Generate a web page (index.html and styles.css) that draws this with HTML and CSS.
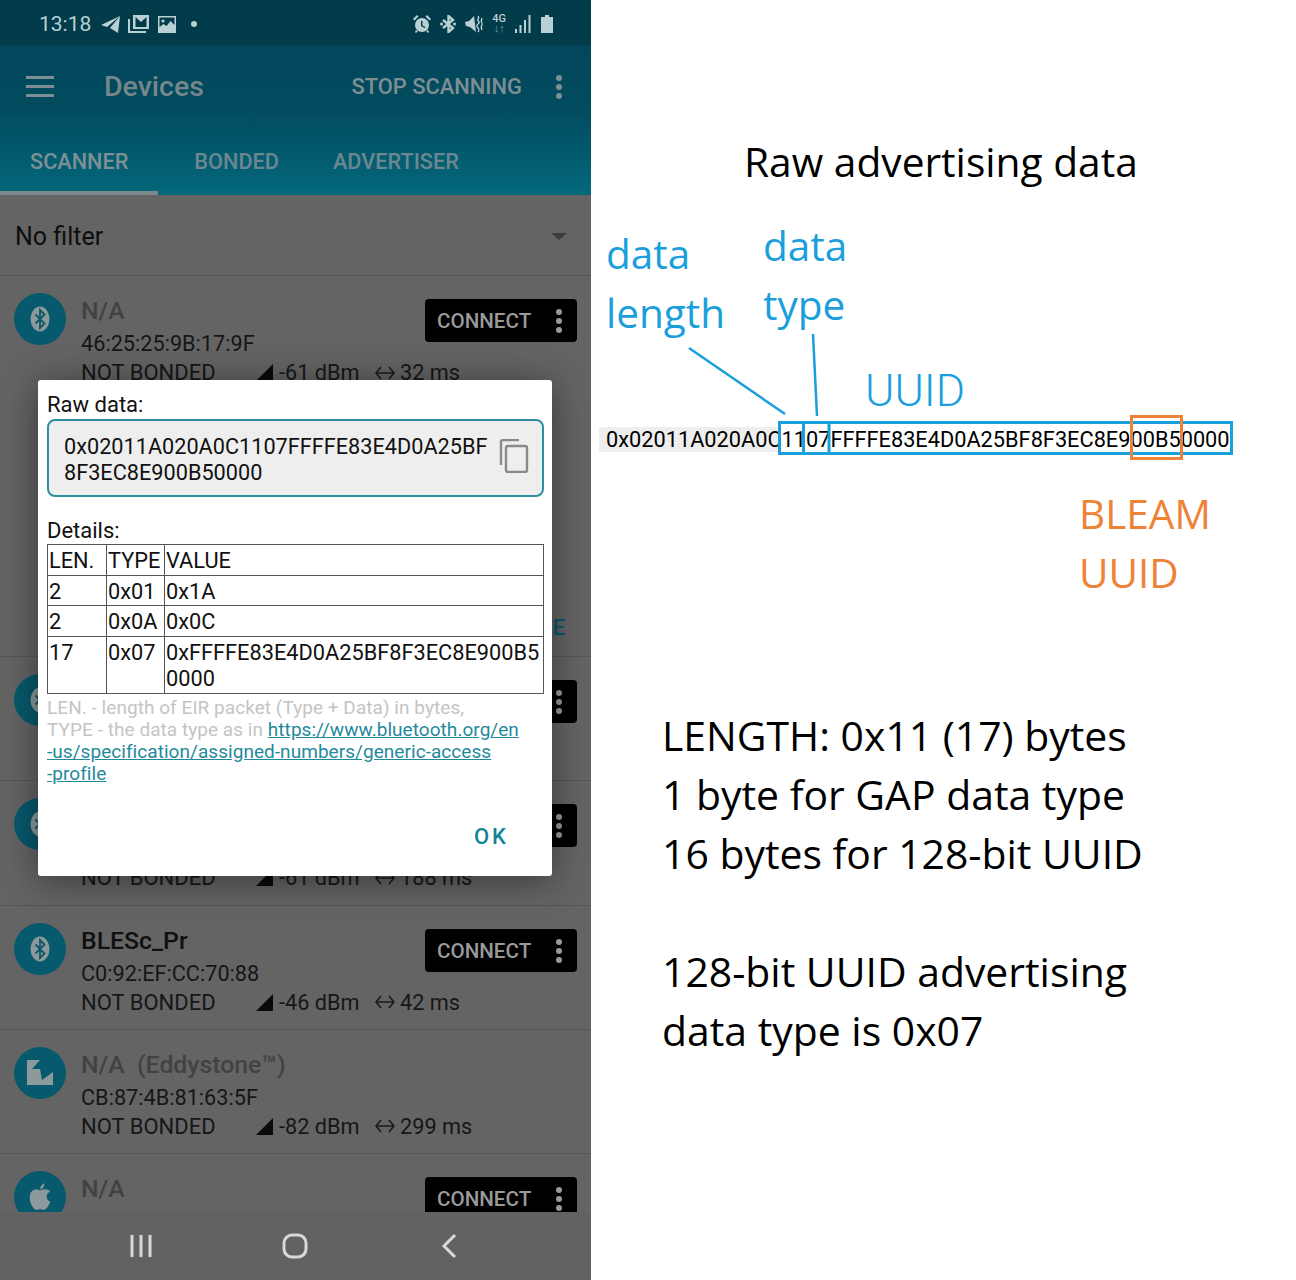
FILE: index.html
```html
<!DOCTYPE html>
<html>
<head>
    <title>Raw advertising data</title>
    <link rel="stylesheet" href="styles.css">
</head>
<body>
    <svg class="defs" width="0" height="0">
        <symbol id="ic-bt" viewBox="0 0 20 26">
            <ellipse cx="10" cy="13" rx="9.500" ry="12.500" fill="#8d9a9c"/>
            <path d="M5.500 8.500l9 9-4.500 4.500V4l4.500 4.500-9 9" fill="none" stroke="#0b566a" stroke-width="1.800"/>
        </symbol>
        <symbol id="ic-dots" viewBox="0 0 8 26">
            <circle cx="4" cy="4" r="3"/><circle cx="4" cy="13" r="3"/><circle cx="4" cy="22" r="3"/>
        </symbol>
        <symbol id="ic-signal" viewBox="0 0 17 17">
            <path d="M17 0v17H0z"/>
        </symbol>
        <symbol id="ic-arrows" viewBox="0 0 20 14">
            <path d="M6 1L1 7l5 6M14 1l5 6-5 6M1 7h18" fill="none" stroke="#1a1a1a" stroke-width="1.600"/>
        </symbol>
    </svg>

    <div class="phone">
        <div class="statusbar">
            <span class="clock">13:18</span>
            <svg class="st-ic" width="19" height="17" viewBox="0 0 19 17"><path d="M19 0L0 9l6 2L19 0 9 12l8 5z"/></svg>
            <svg class="st-ic st-mail" width="21" height="18" viewBox="0 0 21 18"><path fill-rule="evenodd" d="M5 0h16v14H5zM7.500 2v10h11V2l-5.500 5z"/><path d="M0 4h2v12h16v2H0z"/></svg>
            <svg class="st-ic st-pic" width="18" height="17" viewBox="0 0 18 17"><path fill-rule="evenodd" d="M0 0h18v17H0zM1.500 11l4-3 3 2 4-5 4 4V1.500h-15z"/><circle cx="5" cy="5" r="1.600"/></svg>
            <span class="st-dot"></span>
            <span class="st-right">
                <svg class="st-ic" width="18" height="18" viewBox="0 0 18 18"><path fill-rule="evenodd" d="M9 3a7 7 0 1 0 0 14A7 7 0 0 0 9 3zM8 6h1.500v4.500l3 1.500-.7 1L8 11.200z"/><path d="M0 4l4-4 1.500 1.500-4 4zM18 4l-4-4-1.500 1.500 4 4zM3 15l2 1-2 2-1-1zM15 15l-2 1 2 2 1-1z"/></svg>
                <svg class="st-ic st-bt" width="16" height="18" viewBox="0 0 16 18"><path d="M3 5l10 8-4.500 4V1L13 5 3 13" fill="none" stroke="#b9d0d4" stroke-width="2.400"/><circle cx="1.500" cy="9" r="1.500"/><circle cx="14.500" cy="9" r="1.500"/></svg>
                <svg class="st-ic st-mute" width="18" height="18" viewBox="0 0 18 18"><path d="M0 7l4-1 5-5 2 16-6-5-4-1z"/><path d="M13 1c2 2-1 3 0 4.500s2 2 0 3.500-1 3 0 4 1 3 0 4M16.500 3c1 2-1 2 0 4s1 2 0 4 1 2 0 4" fill="none" stroke="#b9d0d4" stroke-width="1.400"/></svg>
                <span class="st-4g"><b>4G</b><i>↓↑</i></span>
                <svg class="st-ic st-sig" width="16" height="18" viewBox="0 0 16 18"><path d="M0 14h2v4H0zM4.500 10h2v8h-2zM9 5h2v13H9zM13.500 0h2v18h-2z"/></svg>
                <svg class="st-ic st-batt" width="12" height="18" viewBox="0 0 12 18"><path d="M4 0h4v2h4v16H0V2h4z"/></svg>
            </span>
        </div>

        <div class="appbar">
            <div class="toolbar">
                <span class="burger"><i></i><i></i><i></i></span>
                <span class="bar-title">Devices</span>
                <span class="bar-action">STOP SCANNING</span>
                <svg class="bar-dots" width="8" height="26"><use href="#ic-dots"/></svg>
            </div>
            <div class="tabs">
                <span class="tab tab-active">SCANNER</span>
                <span class="tab tab-bonded">BONDED</span>
                <span class="tab tab-adv">ADVERTISER</span>
            </div>
        </div>

        <div class="filter">
            <span>No filter</span>
            <span class="caret"></span>
        </div>

        <div class="list">
            <div class="row row-open">
                <div class="avatar"><svg width="20" height="26"><use href="#ic-bt"/></svg></div>
                <div class="info">
                    <div class="name name-na">N/A</div>
                    <div class="addr">46:25:25:9B:17:9F</div>
                    <div class="meta"><span class="bond">NOT BONDED</span><svg class="sig" width="17" height="17"><use href="#ic-signal"/></svg><span class="rssi">-61 dBm</span><svg class="arr" width="20" height="14"><use href="#ic-arrows"/></svg><span>32 ms</span></div>
                </div>
                <div class="connect"><span>CONNECT</span><svg width="8" height="26"><use href="#ic-dots"/></svg></div>
                <span class="more">MORE</span>
            </div>
            <div class="row">
                <div class="avatar"><svg width="20" height="26"><use href="#ic-bt"/></svg></div>
                <div class="info">
                    <div class="name name-na">N/A</div>
                    <div class="addr">5A:11:3C:07:D2:41</div>
                    <div class="meta"><span class="bond">NOT BONDED</span><svg class="sig" width="17" height="17"><use href="#ic-signal"/></svg><span class="rssi">-70 dBm</span><svg class="arr" width="20" height="14"><use href="#ic-arrows"/></svg><span>96 ms</span></div>
                </div>
                <div class="connect"><span>CONNECT</span><svg width="8" height="26"><use href="#ic-dots"/></svg></div>
            </div>
            <div class="row">
                <div class="avatar"><svg width="20" height="26"><use href="#ic-bt"/></svg></div>
                <div class="info">
                    <div class="name name-na">N/A</div>
                    <div class="addr">61:0E:7A:52:C8:13</div>
                    <div class="meta"><span class="bond">NOT BONDED</span><svg class="sig" width="17" height="17"><use href="#ic-signal"/></svg><span class="rssi">-61 dBm</span><svg class="arr" width="20" height="14"><use href="#ic-arrows"/></svg><span>188 ms</span></div>
                </div>
                <div class="connect"><span>CONNECT</span><svg width="8" height="26"><use href="#ic-dots"/></svg></div>
            </div>
            <div class="row">
                <div class="avatar"><svg width="20" height="26"><use href="#ic-bt"/></svg></div>
                <div class="info">
                    <div class="name">BLESc_Pr</div>
                    <div class="addr">C0:92:EF:CC:70:88</div>
                    <div class="meta"><span class="bond">NOT BONDED</span><svg class="sig" width="17" height="17"><use href="#ic-signal"/></svg><span class="rssi">-46 dBm</span><svg class="arr" width="20" height="14"><use href="#ic-arrows"/></svg><span>42 ms</span></div>
                </div>
                <div class="connect"><span>CONNECT</span><svg width="8" height="26"><use href="#ic-dots"/></svg></div>
            </div>
            <div class="row">
                <div class="avatar">
                    <svg width="26" height="25" viewBox="0 0 26 25"><path d="M0 0h13L5 9h8l2 11 11-8v13H0z" fill="#8d9a9c"/></svg>
                </div>
                <div class="info">
                    <div class="name name-na">N/A&nbsp; (Eddystone™)</div>
                    <div class="addr">CB:87:4B:81:63:5F</div>
                    <div class="meta"><span class="bond">NOT BONDED</span><svg class="sig" width="17" height="17"><use href="#ic-signal"/></svg><span class="rssi">-82 dBm</span><svg class="arr" width="20" height="14"><use href="#ic-arrows"/></svg><span>299 ms</span></div>
                </div>
            </div>
            <div class="row">
                <div class="avatar">
                    <svg width="24" height="30" viewBox="0 0 26 30"><path d="M13 8c-3-2-10-2-11 6-1 7 4 15 7 15 2 0 3-1 4-1s2 1 4 1c3 0 6-5 7-9-5-2-5-9 0-11-2-3-7-3-11-1zM13 7c0-3 2-6 5-7 0 3-2 6-5 7z" fill="#8d9a9c"/></svg>
                </div>
                <div class="info">
                    <div class="name name-na">N/A</div>
                </div>
                <div class="connect"><span>CONNECT</span><svg width="8" height="26"><use href="#ic-dots"/></svg></div>
            </div>
        </div>

        <div class="navbar">
            <svg width="24" height="24" viewBox="0 0 24 24"><path d="M3 1v22M12 1v22M21 1v22" fill="none" stroke="#d8d8d8" stroke-width="3"/></svg>
            <svg class="nav-home" width="26" height="26" viewBox="0 0 26 26"><rect x="2" y="2" width="22" height="22" rx="8" fill="none" stroke="#d8d8d8" stroke-width="3"/></svg>
            <svg class="nav-back" width="16" height="26" viewBox="0 0 16 26"><path d="M14 2L3 13l11 11" fill="none" stroke="#d8d8d8" stroke-width="3"/></svg>
        </div>

        <div class="dialog">
            <div class="dlg-label">Raw data:</div>
            <div class="rawbox">
                <span class="rawtext">0x02011A020A0C1107FFFFE83E4D0A25BF<br>8F3EC8E900B50000</span>
                <svg class="copy" width="30" height="34" viewBox="0 0 30 34"><path d="M2 26V3q0-2 2-2h16M9 7h17q2 0 2 2v22q0 2-2 2H9q-2 0-2-2V9q0-2 2-2z" fill="none" stroke="#8a8a8a" stroke-width="2.400"/></svg>
            </div>
            <div class="dlg-label dlg-details">Details:</div>
            <table class="details">
                <tr><td class="c1">LEN.</td><td class="c2">TYPE</td><td>VALUE</td></tr>
                <tr><td>2</td><td>0x01</td><td>0x1A</td></tr>
                <tr><td>2</td><td>0x0A</td><td>0x0C</td></tr>
                <tr><td>17</td><td>0x07</td><td>0xFFFFE83E4D0A25BF8F3EC8E900B5<br>0000</td></tr>
            </table>
            <p class="note">LEN. - length of EIR packet (Type + Data) in bytes,<br>TYPE - the data type as in <a href="#">https://www.bluetooth.org/en<br>-us/specification/assigned-numbers/generic-access<br>-profile</a></p>
            <div class="dlg-foot"><span class="ok">OK</span></div>
        </div>
    </div>

    <div class="panel">
        <h1 class="headline">Raw advertising data</h1>
        <div class="diagram">
            <span class="lbl lbl-len">data<br>length</span>
            <span class="lbl lbl-type">data<br>type</span>
            <span class="lbl lbl-uuid">UUID</span>
            <span class="lbl lbl-bleam">BLEAM<br>UUID</span>
            <span class="hexbg"></span>
            <span class="hex">0x02011A020A0C1107FFFFE83E4D0A25BF8F3EC8E900B50000</span>
            <svg class="marks" width="705" height="300" viewBox="0 0 705 300">
                <g fill="none" stroke="#1a9fdc">
                    <path d="M98 160l96 66" stroke-width="2.500"/>
                    <path d="M222 146l4 82" stroke-width="2.500"/>
                    <rect x="188.500" y="234.500" width="452" height="31" stroke-width="3"/>
                    <path d="M212.500 234v32M238 234v32" stroke-width="3"/>
                </g>
                <rect x="540.500" y="228.500" width="50" height="42" fill="none" stroke="#ee8237" stroke-width="3"/>
            </svg>
        </div>
        <div class="summary">
            LENGTH: 0x11 (17) bytes<br>
            1 byte for GAP data type<br>
            16 bytes for 128-bit UUID<br>
            <br>
            128-bit UUID advertising<br>
            data type is 0x07
        </div>
    </div>
</body>
</html>
```

FILE: styles.css
```css
body {
    margin: 0;
    width: 1296px;
    height: 1280px;
    display: flex;
    overflow: hidden;
    background-color: #ffffff;
    font-family: Roboto, sans-serif;
}

.defs {
    position: absolute;
}

.phone {
    position: relative;
    width: 591px;
    height: 1280px;
    flex-shrink: 0;
    display: flex;
    flex-direction: column;
    overflow: hidden;
    background-color: #646464;
}

/* status bar */
.statusbar {
    height: 45px;
    flex-shrink: 0;
    display: flex;
    align-items: center;
    padding: 3px 38px 0 39px;
    box-sizing: border-box;
    background-color: #023c4b;
    color: #b9d0d4;
}

.clock {
    font-size: 21px;
    margin-right: 10px;
}

.st-ic {
    fill: #b9d0d4;
}

.st-mail {
    margin-left: 8px;
}

.st-pic {
    margin-left: 9px;
}

.st-dot {
    width: 6px;
    height: 6px;
    margin-left: 15px;
    border-radius: 50%;
    background-color: #b9d0d4;
}

.st-right {
    margin-left: auto;
    display: flex;
    align-items: center;
}

.st-bt {
    margin-left: 9px;
}

.st-mute {
    margin-left: 9px;
}

.st-4g {
    margin-left: 9px;
    display: flex;
    flex-direction: column;
    align-items: center;
    font-size: 11px;
    line-height: 10px;
}

.st-4g b {
    font-weight: 500;
}

.st-4g i {
    font-style: normal;
    color: #7c9aa2;
}

.st-sig {
    margin-left: 9px;
}

.st-batt {
    margin-left: 10px;
}

/* app bar */
.appbar {
    height: 150px;
    flex-shrink: 0;
    background: linear-gradient(#02465a, #024c60 45%, #04687b);
}

.toolbar {
    height: 85px;
    display: flex;
    align-items: center;
    padding: 0 0 2px 26px;
    box-sizing: border-box;
}

.burger {
    width: 28px;
    display: flex;
    flex-direction: column;
    gap: 6px;
}

.burger i {
    height: 3px;
    background-color: #7e8f94;
}

.bar-title {
    margin-left: 50px;
    font-size: 28.500px;
    font-weight: 500;
    color: #76878c;
}

.bar-action {
    margin-left: auto;
    font-size: 21.900px;
    font-weight: 500;
    color: #7e8f94;
}

.bar-dots {
    margin: 0 28px 0 33px;
    fill: #7e8f94;
}

.tabs {
    position: relative;
    height: 65px;
    padding-bottom: 2px;
    box-sizing: border-box;
    display: flex;
    align-items: center;
    font-size: 21.700px;
    font-weight: 500;
}

.tab {
    color: #6b8890;
}

.tab-active {
    margin-left: 30px;
    color: #7d9096;
}

.tab-active::after {
    content: "";
    position: absolute;
    left: 0;
    bottom: 0;
    width: 158px;
    height: 4px;
    background-color: #7d8a8c;
}

.tab-bonded {
    margin-left: 66px;
}

.tab-adv {
    margin-left: 54px;
}

/* filter */
.filter {
    height: 81px;
    flex-shrink: 0;
    display: flex;
    align-items: center;
    justify-content: space-between;
    padding: 2px 24px 0 15px;
    box-sizing: border-box;
    border-bottom: 1px solid #545454;
    font-size: 25px;
    color: #0e0e0e;
}

.caret {
    border-left: 8px solid transparent;
    border-right: 8px solid transparent;
    border-top: 7px solid #3c3c3c;
}

/* device rows */
.list {
    flex: 1;
    min-height: 0;
    overflow: hidden;
}

.row {
    position: relative;
    height: 124.300px;
    box-sizing: border-box;
    display: flex;
    align-items: flex-start;
    padding: 17px 14px 0;
    border-bottom: 1px solid #565656;
}

.row-open {
    height: 381px;
}

.avatar {
    width: 52px;
    height: 52px;
    flex-shrink: 0;
    border-radius: 50%;
    background-color: #07596d;
    display: flex;
    align-items: center;
    justify-content: center;
}

.info {
    flex: 1;
    margin-left: 15px;
}

.name {
    height: 36px;
    font-size: 24.800px;
    font-weight: 500;
    line-height: 36px;
    color: #101010;
}

.name-na {
    color: #424242;
}

.addr,
.meta {
    font-size: 21.700px;
    line-height: 29px;
    color: #161616;
}

.meta {
    display: flex;
    align-items: center;
}

.bond {
    width: 175px;
    font-size: 22px;
}

.sig {
    fill: #0a0a0a;
    margin-right: 6px;
}

.rssi {
    width: 96px;
}

.arr {
    margin-right: 5px;
}

.connect {
    position: absolute;
    top: 23px;
    right: 14px;
    width: 152px;
    height: 43px;
    box-sizing: border-box;
    padding: 1px 14px 0 12px;
    display: flex;
    align-items: center;
    justify-content: space-between;
    border-radius: 4px;
    background-color: #000000;
    color: #9a9a9a;
    fill: #9a9a9a;
    font-size: 20.600px;
    font-weight: 500;
}

.more {
    position: absolute;
    right: 26px;
    bottom: 16px;
    font-size: 22px;
    font-weight: 500;
    color: #07596d;
}

.navbar {
    position: absolute;
    left: 0;
    right: 0;
    bottom: 0;
    height: 68px;
    padding-left: 129px;
    box-sizing: border-box;
    display: flex;
    align-items: center;
    background-color: #626262;
}

.nav-home {
    margin-left: 129px;
}

.nav-back {
    margin-left: 133px;
}

/* dialog */
.dialog {
    position: absolute;
    left: 38px;
    top: 380px;
    width: 514px;
    height: 496px;
    box-sizing: border-box;
    padding: 12px 8px 0 9px;
    border-radius: 3px;
    background-color: #ffffff;
    box-shadow: 0 4px 36px rgba(0, 0, 0, 0.45);
    color: #111111;
}

.dlg-label {
    font-size: 22px;
    line-height: 26px;
}

.rawbox {
    height: 78px;
    margin-top: 1px;
    box-sizing: border-box;
    padding: 0 13px 0 15px;
    display: flex;
    align-items: center;
    justify-content: space-between;
    border: 2px solid #2f8fa1;
    border-radius: 8px;
    background-color: #eeeeee;
    font-size: 21.700px;
    line-height: 26px;
}

.rawtext {
    padding-top: 3px;
}

.copy {
    margin-bottom: 4px;
}

.dlg-details {
    margin-top: 21px;
}

.details {
    width: 497px;
    border-collapse: collapse;
    font-size: 21.750px;
    line-height: 25.700px;
}

.details td {
    padding: 3px 0 1px 1px;
    border: 1px solid #555555;
    vertical-align: top;
}

.details .c1 {
    width: 57px;
}

.details .c2 {
    width: 56px;
}

.note {
    margin: 3px 0 0;
    font-size: 19px;
    letter-spacing: 0.050px;
    line-height: 22.300px;
    color: #c4c4c4;
}

.note a {
    color: #1f8a9c;
}

.dlg-foot {
    position: absolute;
    right: 43px;
    bottom: 27px;
}

.ok {
    font-size: 22px;
    font-weight: 500;
    letter-spacing: 3px;
    color: #0f8695;
}

/* right side */
.panel {
    flex: 1;
    display: flex;
    flex-direction: column;
    color: #000000;
    font-family: "Open Sans", sans-serif;
}

.headline {
    margin: 135px 0 0 153px;
    font-size: 40.700px;
    font-weight: 400;
    line-height: 53px;
}

.diagram {
    position: relative;
    height: 518px;
}

.lbl {
    position: absolute;
    font-size: 40.500px;
    line-height: 59px;
    color: #1a9fdc;
}

.lbl-len {
    left: 15px;
    top: 36px;
}

.lbl-type {
    left: 172px;
    top: 28px;
}

.lbl-uuid {
    left: 274px;
    top: 174px;
    font-family: Roboto, sans-serif;
    font-weight: 300;
    font-size: 44.700px;
}

.lbl-bleam {
    left: 488px;
    top: 296px;
    color: #ee8237;
}

.hexbg {
    position: absolute;
    left: 8px;
    top: 239px;
    width: 181px;
    height: 25px;
    background-color: #eeeeee;
}

.hex {
    position: absolute;
    left: 15px;
    top: 237px;
    font-family: Roboto, sans-serif;
    font-size: 21.750px;
    line-height: 30px;
    white-space: nowrap;
}

.marks {
    position: absolute;
    left: 0;
    top: 0;
}

.summary {
    margin: 0 0 0 71px;
    font-size: 40.900px;
    line-height: 59px;
}
```
